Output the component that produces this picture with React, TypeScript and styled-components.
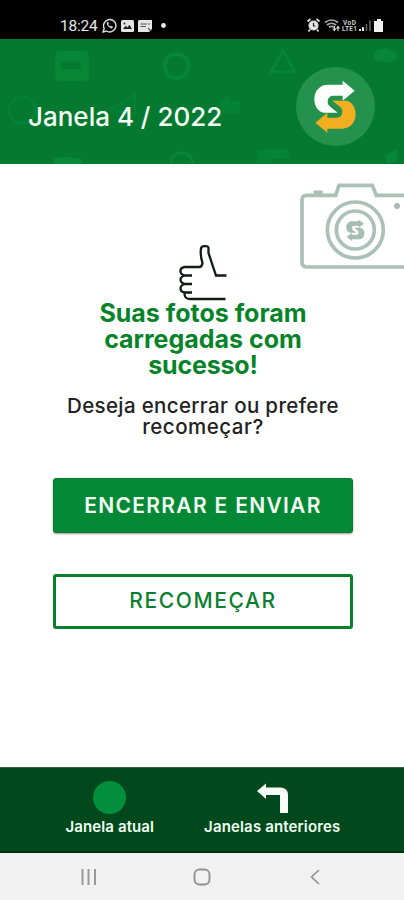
import React from 'react';
import styled, { createGlobalStyle } from 'styled-components';

const GlobalStyle = createGlobalStyle`
  * { box-sizing: border-box; }
  body { margin: 0; background: #fff; font-family: Inter, "Liberation Sans", sans-serif; }
  svg { display: block; flex: none; }
`;

const Screen = styled.div`
  width: 404px;
  height: 900px;
  display: flex;
  flex-direction: column;
  overflow: hidden;
  background: #fefffe;
`;

const StatusBar = styled.div`
  height: 39px;
  flex: none;
  display: flex;
  align-items: center;
  justify-content: space-between;
  padding: 12px 20px 0 60px;
  background: #000;
  color: #e8e8e8;
`;

const StatusGroup = styled.div<{ $gap: number }>`
  display: flex;
  align-items: center;
  gap: ${(p) => p.$gap}px;
`;

const Clock = styled.span`
  width: 38px;
  font: 400 15.5px/18px Roboto, sans-serif;
  letter-spacing: -0.25px;
  white-space: nowrap;
`;

const Header = styled.header`
  position: relative;
  height: 125px;
  flex: none;
  display: flex;
  justify-content: space-between;
  padding: 28px 29px 0 28px;
  background: #037a30;
`;

const Pattern = styled.svg`
  position: absolute;
  inset: 0;
`;

const Title = styled.h1`
  position: relative;
  margin: 34px 0 0;
  font-size: 26px;
  line-height: 32px;
  font-weight: 500;
  letter-spacing: 0;
  color: #f6fff6;
  white-space: nowrap;
`;

const LogoDisc = styled.div`
  position: relative;
  width: 79px;
  height: 79px;
  border-radius: 50%;
  background: #24924d;
`;

const Main = styled.main`
  position: relative;
  flex: 1;
  display: flex;
  flex-direction: column;
  align-items: center;
  padding: 81px 0 0 2px;
`;

const CameraArt = styled.svg`
  position: absolute;
  top: 11px;
  right: 0;
`;

const Success = styled.h2`
  margin: -1px 0 0;
  text-align: center;
  font-size: 25px;
  line-height: 26px;
  font-weight: 700;
  color: #078329;
`;

const Line = styled.span<{ $spacing: number }>`
  display: block;
  white-space: nowrap;
  letter-spacing: ${(p) => p.$spacing}px;
`;

const Question = styled.p`
  margin: 17px 0 0;
  text-align: center;
  font-size: 20.5px;
  line-height: 21px;
  font-weight: 500;
  color: #222;
`;

const Button = styled.button<{ $filled?: boolean }>`
  width: 300px;
  height: 55px;
  flex: none;
  margin-top: 41px;
  padding: ${(p) => (p.$filled ? '0 0 1px' : '0 0 2px')};
  border: ${(p) => (p.$filled ? '1px solid #057d2c' : '3px solid #08802b')};
  border-radius: 3px;
  background: ${(p) => (p.$filled ? '#038836' : '#fff')};
  color: ${(p) => (p.$filled ? '#f2fff2' : '#08802f')};
  box-shadow: ${(p) => (p.$filled ? '0 1px 2px rgba(0, 0, 0, 0.4)' : 'none')};
  font-family: inherit;
  font-size: 21px;
  font-weight: ${(p) => (p.$filled ? 600 : 500)};
`;

const TabBar = styled.nav`
  height: 86px;
  flex: none;
  display: flex;
  justify-content: center;
  gap: 50px;
  padding: 13px 0 0 2px;
  background: #01491d;
  border-top: 1px solid #2b6741;
  border-bottom: 2px solid #01310f;
`;

const Tab = styled.div`
  display: flex;
  flex-direction: column;
  align-items: center;
  color: #effff0;
  font-size: 15px;
  line-height: 20px;
  font-weight: 600;
`;

const TabIcon = styled.div`
  height: 34px;
  margin-bottom: 2px;
`;

const SystemNav = styled.div`
  height: 47px;
  flex: none;
  display: flex;
  align-items: center;
  justify-content: space-between;
  padding: 1px 82px 0 80px;
  background: #f1f1f1;
`;

const ARROW =
  'M178 92 142 62V74H98C73 74 57 93 57 117C57 139 69 155 84 158H127L103 139C93 130 95 107 114 107H142V122Z';

function Swirl({ top, bottom }: { top: string; bottom: string }) {
  return (
    <g>
      <path d={ARROW} fill={top} />
      <path d={ARROW} fill={bottom} transform="rotate(180 119 140)" />
    </g>
  );
}

function HeaderPattern() {
  return (
    <Pattern width="404" height="125" viewBox="0 39 404 125" fill="none" stroke="#07853a" strokeWidth="4">
      <rect x="55" y="51" width="34" height="30" rx="5" fill="#078638" stroke="none" />
      <rect x="61" y="62" width="20" height="7" rx="2" fill="#037a30" stroke="none" />
      <circle cx="176.500" cy="66" r="12" />
      <circle cx="22" cy="110" r="13" strokeWidth="3" opacity=".7" />
      <path d="M112 109 135 94V114Z" strokeWidth="3" opacity=".5" />
      <path d="M283 51 271 72H295Z" strokeWidth="3" />
      <path d="M374 51 386 48 397 54V59L388 63 374 60Z" fill="#07853a" stroke="none" />
      <path d="M219 101 228 96 231 101H240V113H222Z" fill="#07853a" stroke="none" opacity=".7" />
      <path d="M53 164V159Q67 155 82 159V164Z" fill="#07883a" stroke="none" />
      <path d="M171 164C170 149 192 149 193 164" strokeWidth="3" />
      <path d="M257 164V149H289V159H273V164Z" fill="#07853a" stroke="none" opacity=".8" />
      <path d="M386 154 397 149V161L386 164Z" fill="#07853a" stroke="none" />
    </Pattern>
  );
}

export default function App() {
  return (
    <Screen>
      <GlobalStyle />
      <StatusBar>
        <StatusGroup $gap={4}>
          <Clock>18:24</Clock>
          <svg width="15" height="15" viewBox="0 0 15 15" fill="none" stroke="#ddd" strokeWidth="1.400">
            <path d="M1 14 2.200 10.500A6.200 6.200 0 1 1 4.500 13Z" />
            <path d="M5 4.500C4.700 7 7 10 10.200 10.200L10.500 8.700 8.900 8 8 8.800 6 6.700 6.600 5.700 6 4.200Z" fill="#ddd" strokeWidth=".5" />
          </svg>
          <svg width="13" height="12" viewBox="0 0 13 12">
            <rect width="13" height="12" rx="1.500" fill="#e5e5e5" />
            <path d="M2 9 4.800 5.800 6.500 7.500 8.500 4.800 11 9Z" fill="#222" />
            <circle cx="3.500" cy="3.500" r="1" fill="#333" />
          </svg>
          <svg width="28" height="12" viewBox="0 0 28 12">
            <path d="M1 0H14V9L11 12H0V1Z" fill="#e5e5e5" />
            <path d="M2.500 4H9M2.500 6.500H8M10 4H12M10 8 13 11" stroke="#555" strokeWidth="1.200" />
            <circle cx="25.500" cy="5.500" r="2.400" fill="#eee" />
          </svg>
        </StatusGroup>
        <svg width="78" height="15" viewBox="0 0 78 15" fill="none" stroke="#ddd">
          <circle cx="7.500" cy="7.500" r="4.500" fill="#e8e8e8" strokeWidth="1.200" />
          <path d="M1.500 3.500 4.500 1M10.500 1 13.500 3.500M4 11.500 2.500 13.500M11 11.500 12.500 13.500" strokeWidth="1.800" />
          <path d="M7.500 4.800V8H9.500" stroke="#222" strokeWidth="1.200" />
          <path d="M19 4.500Q25.500-.5 32 4.500M21 7Q25.500 3.500 30 7M23 9.300Q25.500 7.500 28 9.300" stroke="#aaa" strokeWidth="1.700" />
          <path d="M28.500 8V12M26.700 10.500 28.500 12.500 30 10.500M32 13V9M30.500 10.500 32 8.500 33.500 10.500" strokeWidth="1.100" />
          <g fill="#ccc" stroke="none" fontFamily="Roboto" fontWeight="700" fontSize="6.500">
            <text x="37" y="6.500" textLength="13">VoD</text>
            <text x="36" y="13" textLength="15">LTE1</text>
          </g>
          <path d="M54 13V11M57 13V9" strokeWidth="2" />
          <path d="M60.500 13V6M64 13V2.500" stroke="#666" strokeWidth="1.500" />
          <path d="M68 3H71V1H75V3H77V14H68Z" fill="#f2f2f2" stroke="none" />
        </svg>
      </StatusBar>

      <Header>
        <HeaderPattern />
        <Title>Janela 4 / 2022</Title>
        <LogoDisc>
          <svg width="79" height="79" viewBox="2 21 237 237">
            <Swirl top="#fcfffc" bottom="#f3ad21" />
          </svg>
        </LogoDisc>
      </Header>

      <Main>
        <CameraArt width="119" height="100" viewBox="0 0 357 300" fill="none" stroke="#abc1b7" strokeWidth="11">
          <path d="M360 61H274L262 31H162L152 61H65Q51 61 51 75V261Q51 276 66 276H360" />
          <path d="M86 52H113" />
          <circle cx="211" cy="165" r="84" />
          <circle cx="211" cy="165" r="57" />
          <circle cx="336" cy="93" r="9" fill="#abb9b2" stroke="none" />
          <g transform="translate(211 166) scale(.44 .41) translate(-119 -140)" stroke="none">
            <Swirl top="#a5bdb2" bottom="#a5bdb2" />
          </g>
        </CameraArt>
        <svg width="50" height="56" viewBox="178 245 50 56" fill="none" stroke="#101c15" strokeWidth="2.300">
          <path d="M226.500 275.500H216L208.500 253V247.500Q208 246 205 246.200Q201.500 246 201 248.500Q200 255 202.500 263Q202 267 199 267H184.500C179 268 179 274.500 185 275.500H192M185 275.500C179 277 179 282.500 185 284H192M185 284C179 285.500 179 291.500 185 292.500H192M184.500 292.500Q184 299 190 299H225.500" />
        </svg>
        <Success>
          <Line $spacing={0}>Suas fotos foram</Line>
          <Line $spacing={0}>carregadas com</Line>
          <Line $spacing={-0.2}>sucesso!</Line>
        </Success>
        <Question>
          <Line $spacing={0.35}>Deseja encerrar ou prefere</Line>
          <Line $spacing={0.5}>recomeçar?</Line>
        </Question>
        <Button $filled>
          <Line $spacing={1.3}>ENCERRAR E ENVIAR</Line>
        </Button>
        <Button>
          <Line $spacing={1.6}>RECOMEÇAR</Line>
        </Button>
      </Main>

      <TabBar>
        <Tab>
          <TabIcon>
            <svg width="33" height="33" viewBox="0 0 33 33">
              <circle cx="16.500" cy="16.500" r="16.500" fill="#028e3c" />
            </svg>
          </TabIcon>
          <Line $spacing={0.1}>Janela atual</Line>
        </Tab>
        <Tab>
          <TabIcon>
            <svg width="31" height="33" viewBox="0 -1 31 33">
              <path d="M0 9 9 1.500V5.500H24Q31 6 31 13V31H23V13H9V17Z" fill="#f7fff7" />
            </svg>
          </TabIcon>
          <Line $spacing={0.15}>Janelas anteriores</Line>
        </Tab>
      </TabBar>

      <SystemNav>
        <svg width="16" height="16" viewBox="0 0 16 16" stroke="#999" strokeWidth="2">
          <path d="M2.500 0V16M8.500 0V16M15 0V16" />
        </svg>
        <svg width="18" height="18" viewBox="0 0 18 18" fill="none" stroke="#929292" strokeWidth="1.900">
          <rect x="1.500" y="1.500" width="15" height="15" rx="5" />
        </svg>
        <svg width="14" height="16" viewBox="-2 0 14 16" fill="none" stroke="#929292" strokeWidth="1.700">
          <path d="M9 1 1.500 8 9 15" />
        </svg>
      </SystemNav>
    </Screen>
  );
}
